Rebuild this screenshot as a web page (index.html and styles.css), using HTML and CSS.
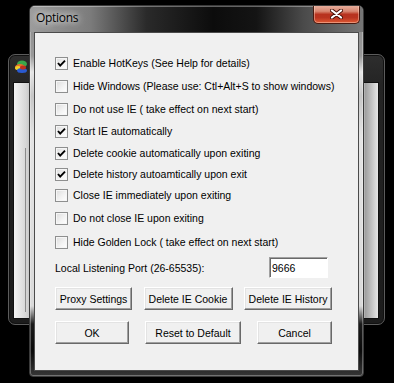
FILE: index.html
```html
<!DOCTYPE html>
<html lang="en">
<head>
    <meta charset="UTF-8">
    <meta name="viewport" content="width=device-width, initial-scale=1.0">
    <title>Options</title>
    <link rel="stylesheet" href="styles.css">
</head>
<body>
    <div class="bgwin">
        <svg class="bgicon" width="14" height="16" viewBox="0 0 14 16">
            <ellipse cx="8" cy="5" rx="5" ry="3.5" fill="#3aa64a"/>
            <ellipse cx="6" cy="8" rx="5" ry="3" fill="#e8702a"/>
            <ellipse cx="4" cy="9" rx="3" ry="2" fill="#f2d02a"/>
            <ellipse cx="8" cy="11.5" rx="5" ry="2.5" fill="#2a5ad0"/>
            <ellipse cx="9" cy="8.5" rx="3" ry="2" fill="#c03020"/>
        </svg>
        <div class="bgclient"><div class="bgline"></div></div>
    </div>

    <div class="dialog">
        <div class="titlebar">
            <span class="title">Options</span>
            <div class="close">
                <svg width="13" height="10" viewBox="0 0 13 10">
                    <path d="M2 1.5 L11 8.5 M11 1.5 L2 8.5" stroke="#4a1208" stroke-width="4" stroke-linecap="round"/>
                    <path d="M2 1.5 L11 8.5 M11 1.5 L2 8.5" stroke="#fff" stroke-width="2.2" stroke-linecap="round"/>
                </svg>
            </div>
        </div>
        <div class="frame">
            <div class="client">
                <div class="checks">
                    <div class="check"><span class="box"><svg width="11" height="11" viewBox="0 0 11 11"><path d="M2 5 L4.2 7.6 L9 2.6" fill="none" stroke="#000" stroke-width="1.9"/></svg></span>Enable HotKeys (See Help for details)</div>
                    <div class="check"><span class="box"></span>Hide Windows (Please use: Ctl+Alt+S to show windows)</div>
                    <div class="check"><span class="box"></span>Do not use IE ( take effect on next start)</div>
                    <div class="check"><span class="box"><svg width="11" height="11" viewBox="0 0 11 11"><path d="M2 5 L4.2 7.6 L9 2.6" fill="none" stroke="#000" stroke-width="1.9"/></svg></span>Start IE automatically</div>
                    <div class="check"><span class="box"><svg width="11" height="11" viewBox="0 0 11 11"><path d="M2 5 L4.2 7.6 L9 2.6" fill="none" stroke="#000" stroke-width="1.9"/></svg></span>Delete cookie automatically upon exiting</div>
                    <div class="check"><span class="box"><svg width="11" height="11" viewBox="0 0 11 11"><path d="M2 5 L4.2 7.6 L9 2.6" fill="none" stroke="#000" stroke-width="1.9"/></svg></span>Delete history autoamtically upon exit</div>
                    <div class="check"><span class="box"></span>Close IE immediately upon exiting</div>
                    <div class="check"><span class="box"></span>Do not close IE upon exiting</div>
                    <div class="check"><span class="box"></span>Hide Golden Lock ( take effect on next start)</div>
                </div>
                <div class="port">
                    <span class="port-label">Local Listening Port (26-65535):</span>
                    <input type="text" value="9666">
                </div>
                <div class="btnrow">
                    <button class="btn w-proxy">Proxy Settings</button>
                    <button class="btn w-cookie">Delete IE Cookie</button>
                    <button class="btn w-history">Delete IE History</button>
                </div>
                <div class="btnrow second">
                    <button class="btn w-ok">OK</button>
                    <button class="btn w-reset">Reset to Default</button>
                    <button class="btn w-cancel">Cancel</button>
                </div>
            </div>
        </div>
    </div>
</body>
</html>
```

FILE: styles.css
```css
body {
    margin: 0;
    width: 394px;
    height: 383px;
    background-color: #000;
    position: relative;
    overflow: hidden;
    font-family: 'Liberation Sans', Arial, sans-serif;
    font-size: 10.5px;
    color: #000;
}
/* window behind the dialog */
.bgwin {
    position: absolute;
    left: 8px;
    top: 54px;
    width: 377px;
    height: 271px;
    box-sizing: border-box;
    padding: 27px 5px 5px 4px;
    background: linear-gradient(180deg, #2e2e2e 0, #242424 30px, #1c1c1c 100%);
    border: 1px solid #5c5c5c;
    border-radius: 7px;
    box-shadow: inset 0 0 0 1px #111;
}
.bgicon {
    position: absolute;
    left: 5px;
    top: 4px;
}
.bgclient {
    height: 100%;
    box-sizing: border-box;
    border: 1px solid #111;
    background: linear-gradient(90deg, #f4f4f4 0, #d6d6d6 12px, #c4c4c4 16px, #c4c4c4 calc(100% - 14px), #9e9e9e calc(100% - 13px), #d0d0d0 calc(100% - 4px), #e6e6e6 100%);
    position: relative;
}
.bgline {
    position: absolute;
    left: 11px;
    top: 65px;
    bottom: 6px;
    width: 1px;
    background-color: #8a8a8a;
}
/* dialog */
.dialog {
    position: absolute;
    left: 29px;
    top: 5px;
    width: 335px;
    height: 372px;
    box-sizing: border-box;
    border: 1px solid #3a3a3a;
    border-radius: 6px 6px 4px 4px;
    display: flex;
    flex-direction: column;
    background: linear-gradient(180deg, #8a8a8a 0, #9a9a9a 50px, #e6e6e6 66px, #c6c6c6 90px, #e4e4e4 130px, #dadada 300px, #1a1a1a 318px, #0a0a0a 345px, #3a3a3a 372px);
    box-shadow: inset 0 0 0 1px rgba(255, 255, 255, 0.3);
    overflow: hidden;
}
.titlebar {
    height: 26px;
    flex-shrink: 0;
    display: flex;
    justify-content: space-between;
    align-items: flex-start;
    padding: 0 3px 0 6px;
    background: linear-gradient(90deg, #9c9c9c 0, #7c7c7c 18%, #2a2a2a 35%, #0c0c0c 55%, #141414 68%, #4a4a4a 82%, #767676 100%);
    box-shadow: inset 0 1px 0 rgba(255, 255, 255, 0.35);
}
.title {
    font-family: 'Open Sans', sans-serif;
    font-size: 12px;
    letter-spacing: -0.3px;
    line-height: 16px;
    margin-top: 4px;
    color: #000;
    text-shadow: 0 0 6px rgba(255, 255, 255, 0.9), 0 0 10px rgba(255, 255, 255, 0.6);
}
.close {
    width: 47px;
    height: 19px;
    box-sizing: border-box;
    margin-top: -1px;
    border: 1px solid #4a1a10;
    border-top: none;
    border-radius: 0 0 5px 5px;
    background: linear-gradient(180deg, #e8b4a4 0%, #d88670 35%, #b8321e 52%, #b93420 70%, #e05a34 100%);
    box-shadow: inset 0 0 0 1px rgba(255, 220, 200, 0.45);
    display: flex;
    align-items: center;
    justify-content: center;
}
.frame {
    flex: 1;
    padding: 0 4px 5px 4px;
    display: flex;
    min-width: 0;
}
.client {
    flex: 1;
    min-width: 0;
    box-sizing: border-box;
    border: 1px solid #4b4b4b;
    background-color: #f0f0f0;
    padding: 24px 26px 0 20px;
}
.checks {
    display: flex;
    flex-direction: column;
}
.check {
    display: flex;
    align-items: center;
    height: 13px;
    line-height: 13px;
    white-space: nowrap;
    margin-top: 10px;
}
.check:first-child {
    margin-top: 0;
}
.check:nth-child(4),
.check:nth-child(5) {
    margin-top: 9px;
}
.check:nth-child(6),
.check:nth-child(7) {
    margin-top: 8px;
}
.check:nth-child(9) {
    margin-top: 11px;
}
.box {
    width: 13px;
    height: 13px;
    box-sizing: border-box;
    margin-right: 5px;
    border: 1px solid #8e8f8f;
    background: linear-gradient(135deg, #dcdcdc 0%, #f4f4f4 60%, #ffffff 100%);
    box-shadow: inset 0 0 0 1px #f6f6f6;
    display: flex;
    align-items: center;
    justify-content: center;
    flex-shrink: 0;
}
.box svg {
    display: block;
}
.port {
    display: flex;
    align-items: center;
    justify-content: space-between;
    margin-top: 8px;
    height: 21px;
}
.port input {
    width: 59px;
    height: 21px;
    box-sizing: border-box;
    margin-right: 4px;
    padding: 0 2px;
    border: 1px solid;
    border-color: #a0a0a0 #ffffff #ffffff #a0a0a0;
    box-shadow: inset 1px 1px 0 #696969;
    background-color: #fff;
    font-family: 'Liberation Sans', Arial, sans-serif;
    font-size: 10.5px;
    color: #000;
    outline: none;
}
.btnrow {
    display: flex;
    justify-content: space-between;
    margin-top: 9px;
}
.btnrow.second {
    margin-top: 11px;
}
.btn {
    height: 23px;
    box-sizing: border-box;
    padding: 0;
    border: 1px solid;
    border-color: #ffffff #696969 #696969 #ffffff;
    box-shadow: inset -1px -1px 0 #a0a0a0, inset 1px 1px 0 #e3e3e3;
    background-color: #f0f0f0;
    font-family: 'Liberation Sans', Arial, sans-serif;
    font-size: 10.5px;
    color: #000;
}
.w-proxy { width: 77px; }
.w-cookie { width: 89px; }
.w-history { width: 88px; }
.w-ok { width: 74px; }
.w-reset { width: 96px; }
.w-cancel { width: 75px; }
```
